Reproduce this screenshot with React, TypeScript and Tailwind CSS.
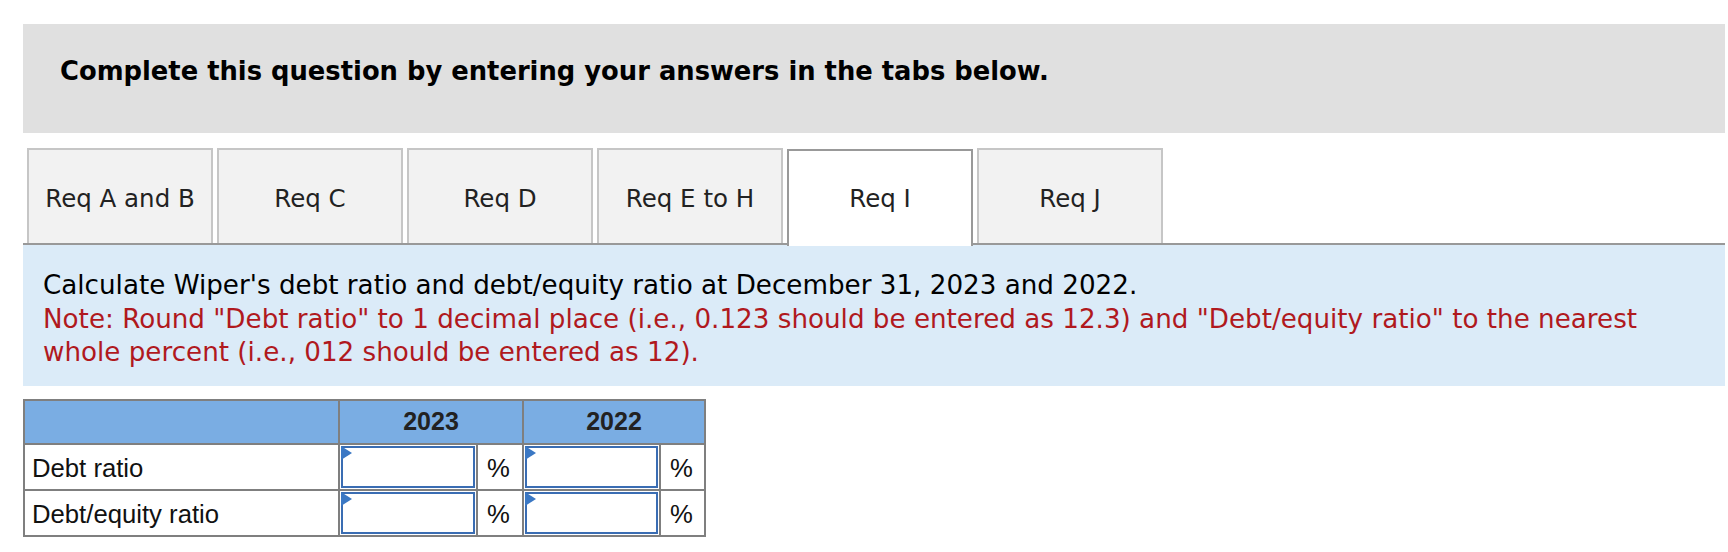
import React from "react";

const tabs = ["Req A and B", "Req C", "Req D", "Req E to H", "Req I", "Req J"];

function InputCell() {
  return (
    <div className="bg-white relative">
      <div className="absolute inset-[1px] border-2 border-[#3a6db3] bg-white" />
      <div className="absolute left-[1px] top-[1px] w-0 h-0 border-t-[7px] border-b-[7px] border-l-[11px] border-t-transparent border-b-transparent border-l-[#3b78c4]" />
    </div>
  );
}

function Pct() {
  return (
    <div className="bg-white flex items-center pl-[9px] pt-[3px] text-[25.7px] text-[#111]" style={{ fontFamily: '"Liberation Sans", Arial, sans-serif' }}>
      %
    </div>
  );
}

export default function App() {
  return (
    <div className="w-[1728px] h-[552px] bg-white pt-[24px] pl-[23px]" style={{ fontFamily: '"DejaVu Sans", Verdana, sans-serif' }}>
      <div className="w-[1702px]">
        <div className="h-[109px] bg-[#e0e0e0] pl-[37px] pt-[32px]">
          <div className="text-[25.8px] leading-[30px] font-bold text-black">
            Complete this question by entering your answers in the tabs below.
          </div>
        </div>

        <div className="mt-[15px] flex items-start gap-[4px] pl-[4px] border-b-2 border-[#999] h-[97px]">
          {tabs.map((t) =>
            t === "Req I" ? (
              <div
                key={t}
                className="w-[186px] h-[97px] mt-[1px] bg-white border-2 border-b-0 border-[#999] flex items-center justify-center pt-[2px] text-[24.5px] text-[#222] relative z-10"
              >
                {t}
              </div>
            ) : (
              <div
                key={t}
                className="w-[186px] h-[95px] bg-[#f2f2f2] border-2 border-b-0 border-[#c6c6c6] flex items-center justify-center pt-[6px] text-[24.5px] text-[#222]"
              >
                {t}
              </div>
            )
          )}
        </div>

        <div className="bg-[#dbebf8] pl-[20px] pr-[20px] pt-[24px] pb-[16px] text-[26.2px] leading-[33.5px]">
          <div className="text-black">Calculate Wiper's debt ratio and debt/equity ratio at December 31, 2023 and 2022.</div>
          <div className="text-[#b0191e]">
            Note: Round "Debt ratio" to 1 decimal place (i.e., 0.123 should be entered as 12.3) and "Debt/equity ratio" to the nearest whole percent (i.e., 012 should be entered as 12).
          </div>
        </div>

        <div
          className="mt-[13px] w-[683px] bg-[#7f7f7f] p-[2px] grid grid-cols-[313px_136px_44px_135px_43px] grid-rows-[42px_44px_44px] gap-[2px] text-[25.7px] text-[#111]"
          style={{ fontFamily: '"Liberation Sans", Arial, sans-serif' }}
        >
          <div className="bg-[#7aade3]" />
          <div className="bg-[#7aade3] col-span-2 flex items-center justify-center font-bold text-[25px] text-[#222]">2023</div>
          <div className="bg-[#7aade3] col-span-2 flex items-center justify-center font-bold text-[25px] text-[#222]">2022</div>

          <div className="bg-white flex items-center pl-[7px] pt-[3px]">Debt ratio</div>
          <InputCell />
          <Pct />
          <InputCell />
          <Pct />

          <div className="bg-white flex items-center pl-[7px] pt-[3px]">Debt/equity ratio</div>
          <InputCell />
          <Pct />
          <InputCell />
          <Pct />
        </div>
      </div>
    </div>
  );
}
